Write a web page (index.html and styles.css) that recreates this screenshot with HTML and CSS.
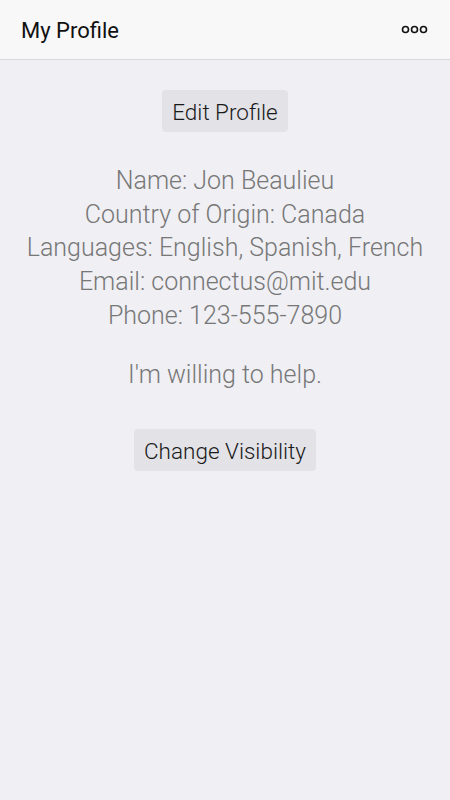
FILE: index.html
```html
<!DOCTYPE html>
<html lang="en">
<head>
  <meta charset="UTF-8">
  <title>My Profile</title>
  <meta name="viewport" content="width=device-width, initial-scale=1">
  <link rel="stylesheet" href="styles.css">
</head>
<body>
  <header class="topbar">
    <span class="topbar-title">My Profile</span>
    <button class="more-btn" aria-label="More">
      <svg width="27" height="9" viewBox="0 0 27 9">
        <circle cx="4.5" cy="4.5" r="3" fill="none" stroke="#111" stroke-width="1.6"/>
        <circle cx="13.5" cy="4.5" r="3" fill="none" stroke="#111" stroke-width="1.6"/>
        <circle cx="22.5" cy="4.5" r="3" fill="none" stroke="#111" stroke-width="1.6"/>
      </svg>
    </button>
  </header>
  <main class="profile">
    <button class="btn">Edit Profile</button>
    <div class="info">
      <p>Name: Jon Beaulieu</p>
      <p>Country of Origin: Canada</p>
      <p>Languages: English, Spanish, French</p>
      <p>Email: connectus@mit.edu</p>
      <p>Phone: 123-555-7890</p>
    </div>
    <p class="status">I'm willing to help.</p>
    <button class="btn">Change Visibility</button>
  </main>
</body>
</html>
```
FILE: styles.css
```css
* {
  box-sizing: border-box;
}
html, body {
  margin: 0;
  padding: 0;
  height: 100%;
}
body {
  font-family: Roboto, "Liberation Sans", sans-serif;
  background: #efeff4;
  color: #777;
}

.topbar {
  height: 60px;
  display: flex;
  align-items: center;
  justify-content: space-between;
  padding: 0 22px 0 21px;
  background: #f8f8f8;
  border-bottom: 1px solid #d8d8dc;
}
.topbar-title {
  font-size: 22px;
  color: #111;
  padding-top: 2px;
}
.more-btn {
  border: 0;
  background: none;
  padding: 0;
  display: flex;
}

.profile {
  display: flex;
  flex-direction: column;
  align-items: center;
  padding-top: 30px;
}
.btn {
  font-family: Roboto, "Liberation Sans", sans-serif;
  font-weight: 300;
  font-size: 22.5px;
  color: #1a1a1a;
  background: #e2e2e7;
  border: 0;
  border-radius: 4px;
  height: 42px;
  padding: 2px 10px 0;
}
.info {
  margin-top: 32px;
  text-align: center;
}
.info p,
.status {
  margin: 0;
  font-weight: 300;
  font-size: 25px;
  line-height: 33.7px;
}
.status {
  margin-top: 25px;
  margin-bottom: 38px;
}
```
